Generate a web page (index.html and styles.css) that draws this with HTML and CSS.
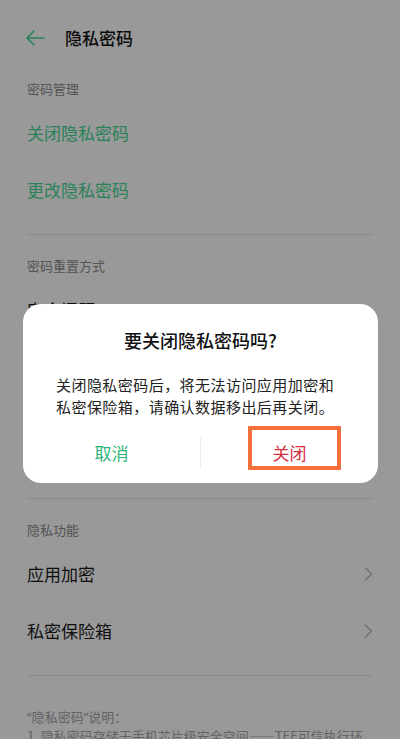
FILE: index.html
```html
<!DOCTYPE html>
<html lang="zh-CN">
<head>
<meta charset="utf-8">
<title>隐私密码</title>
<link rel="stylesheet" href="styles.css">
</head>
<body>
<div class="page">
  <header class="topbar">
    <svg class="back" width="20" height="18" viewBox="0 0 20 18" aria-hidden="true">
      <path d="M19 9H2M9 2L2 9l7 7" fill="none" stroke="currentColor" stroke-width="1.6" stroke-linecap="round" stroke-linejoin="round"/>
    </svg>
    <h1 class="title">隐私密码</h1>
  </header>

  <section class="group group-first">
    <div class="group-label">密码管理</div>
    <div class="row row-action">关闭隐私密码</div>
    <div class="row row-action">更改隐私密码</div>
  </section>

  <section class="group group-reset">
    <div class="group-label">密码重置方式</div>
    <div class="row"><span>安全问题</span></div>
  </section>

  <section class="group">
    <div class="group-label">隐私功能</div>
    <div class="row">
      <span>应用加密</span>
      <svg class="chev" width="9" height="16" viewBox="0 0 9 16" aria-hidden="true"><path d="M1.5 2l6 6-6 6" fill="none" stroke="currentColor" stroke-width="1.4" stroke-linecap="round" stroke-linejoin="round"/></svg>
    </div>
    <div class="row">
      <span>私密保险箱</span>
      <svg class="chev" width="9" height="16" viewBox="0 0 9 16" aria-hidden="true"><path d="M1.5 2l6 6-6 6" fill="none" stroke="currentColor" stroke-width="1.4" stroke-linecap="round" stroke-linejoin="round"/></svg>
    </div>
  </section>

  <section class="note">
    <div class="note-head"><span class="q">“</span>隐私密码<span class="q">”</span>说明：</div>
    <p class="note-text">1. 隐私密码存储于手机芯片级安全空间——TEE可信执行环境中，无法被其他应用读取。</p>
  </section>

  <div class="scrim"></div>

  <div class="dialog" role="dialog">
    <div class="dialog-title">要关闭隐私密码吗?</div>
    <div class="dialog-body">关闭隐私密码后，将无法访问应用加密和<br>私密保险箱，请确认数据移出后再关闭。</div>
    <div class="dialog-actions">
      <button class="btn btn-cancel">取消</button>
      <span class="btn-sep"></span>
      <button class="btn btn-confirm">关闭</button>
    </div>
    <div class="mark"></div>
  </div>
</div>
</body>
</html>
```

FILE: styles.css
```css
html, body {
  margin: 0;
  padding: 0;
  background: #ffffff;
}

body {
  font-family: "Noto Sans CJK SC", "Noto Sans", sans-serif;
  color: #1a1a1a;
}

.page {
  position: relative;
  height: 739px;
  overflow: hidden;
  background: #ffffff;
}

/* top bar */
.topbar {
  height: 76px;
  display: flex;
  align-items: center;
  padding-left: 25px;
  box-sizing: border-box;
}

.back {
  color: #45d993;
  display: block;
}

.title {
  margin: 0 0 0 20px;
  font-size: 17px;
  font-weight: 500;
  line-height: 24px;
  color: #111111;
}

/* settings groups */
.group {
  margin: 0 27px;
  padding: 22px 0 16px;
  border-bottom: 1px solid #e6e6e6;
}

.group-first {
  padding-top: 4px;
}

.group-reset {
  padding-bottom: 160px;
}

.group-label {
  font-size: 13px;
  line-height: 18px;
  color: #8c8c8c;
  margin-bottom: 6px;
}

.row {
  height: 57px;
  display: flex;
  align-items: center;
  justify-content: space-between;
  font-size: 17px;
  color: #1a1a1a;
}

.row-action {
  color: #45d993;
}

.chev {
  color: #b8b8b8;
  display: block;
}

/* explanatory text */
.note {
  margin: 0 27px;
  padding-top: 32px;
  color: #a6a6a6;
  font-size: 13px;
}

.note-head {
  line-height: 18px;
}

.q {
  font-family: "Noto Sans", sans-serif;
}

.note-text {
  margin: 0;
  line-height: 19px;
}

/* modal */
.scrim {
  position: absolute;
  inset: 0;
  background: rgba(0, 0, 0, 0.4);
}

.dialog {
  position: absolute;
  top: 304px;
  left: 23px;
  width: 355px;
  height: 179px;
  box-sizing: border-box;
  background: #ffffff;
  border-radius: 18px;
  padding-top: 24px;
}

.dialog-title {
  text-align: center;
  font-size: 18px;
  font-weight: 500;
  line-height: 24px;
  color: #111111;
}

.dialog-body {
  margin-top: 22px;
  padding: 0 32px 0 33px;
  font-size: 15px;
  letter-spacing: 0.45px;
  line-height: 22px;
  color: #222222;
}

.dialog-actions {
  margin-top: 8px;
  height: 52px;
  display: flex;
  align-items: center;
}

.btn {
  flex: 1;
  height: 100%;
  border: 0;
  background: transparent;
  font-family: inherit;
  font-size: 17px;
  padding: 0;
}

.btn-cancel {
  color: #2db577;
}

.btn-confirm {
  color: #d42a40;
}

.btn-sep {
  width: 1px;
  height: 31px;
  background: #ececec;
}

/* highlight frame around the confirm button */
.mark {
  position: absolute;
  left: 225px;
  top: 122px;
  width: 93px;
  height: 44px;
  box-sizing: border-box;
  border: 4px solid #f3703c;
}
```
